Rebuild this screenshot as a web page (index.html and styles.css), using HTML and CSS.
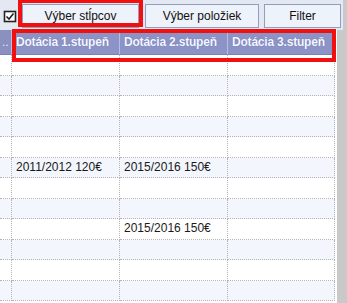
FILE: index.html
```html
<!DOCTYPE html>
<html lang="sk">
<head>
    <meta charset="UTF-8">
    <title>Dotácie</title>
    <link rel="stylesheet" href="styles.css">
</head>
<body>
    <div class="window">
        <div class="toolbar">
            <span class="check-icon">
                <svg width="14" height="13" viewBox="0 0 14 13">
                    <rect x="1.5" y="1.5" width="11" height="10" fill="#fff" stroke="#222" stroke-width="1.6"/>
                    <path d="M3.5 6.5 L6 9 L10.5 3.5" fill="none" stroke="#222" stroke-width="1.6"/>
                </svg>
            </span>
            <button class="tool-btn btn-columns">Výber stĺpcov</button>
            <button class="tool-btn btn-items">Výber položiek</button>
            <button class="tool-btn btn-filter">Filter</button>
        </div>

        <div class="body-area">
            <div class="grid">
                <div class="row head">
                    <div class="cell">..</div>
                    <div class="cell">Dotácia 1.stupeň</div>
                    <div class="cell">Dotácia 2.stupeň</div>
                    <div class="cell">Dotácia 3.stupeň</div>
                </div>
                <div class="row"><div class="cell"></div><div class="cell"></div><div class="cell"></div><div class="cell"></div></div>
                <div class="row alt"><div class="cell"></div><div class="cell"></div><div class="cell"></div><div class="cell"></div></div>
                <div class="row"><div class="cell"></div><div class="cell"></div><div class="cell"></div><div class="cell"></div></div>
                <div class="row alt"><div class="cell"></div><div class="cell"></div><div class="cell"></div><div class="cell"></div></div>
                <div class="row"><div class="cell"></div><div class="cell"></div><div class="cell"></div><div class="cell"></div></div>
                <div class="row alt"><div class="cell"></div><div class="cell">2011/2012 120€</div><div class="cell">2015/2016 150€</div><div class="cell"></div></div>
                <div class="row"><div class="cell"></div><div class="cell"></div><div class="cell"></div><div class="cell"></div></div>
                <div class="row alt"><div class="cell"></div><div class="cell"></div><div class="cell"></div><div class="cell"></div></div>
                <div class="row"><div class="cell"></div><div class="cell"></div><div class="cell">2015/2016 150€</div><div class="cell"></div></div>
                <div class="row alt"><div class="cell"></div><div class="cell"></div><div class="cell"></div><div class="cell"></div></div>
                <div class="row"><div class="cell"></div><div class="cell"></div><div class="cell"></div><div class="cell"></div></div>
                <div class="row alt"><div class="cell"></div><div class="cell"></div><div class="cell"></div><div class="cell"></div></div>
            </div>
            <div class="scrollbar"></div>
        </div>

        <!-- annotation frames -->
        <div class="mark mark-button"></div>
        <div class="mark mark-header"></div>
    </div>
</body>
</html>
```

FILE: styles.css
```css
* {
    margin: 0;
    padding: 0;
    box-sizing: border-box;
}

body {
    font-family: 'Liberation Sans', Arial, sans-serif;
    font-size: 12px;
    color: #1a1a1a;
    background: #fff;
}

.window {
    position: relative;
    width: 347px;
    height: 303px;
    overflow: hidden;
    background: #fff;
}

/* Toolbar */
.toolbar {
    height: 30px;
    background: #e3e8f2;
    display: flex;
    align-items: flex-start;
    padding-top: 4px;
    border-right: 4px solid #c9c9c9;
}

.check-icon {
    width: 22px;
    height: 20px;
    display: flex;
    align-items: center;
    padding-left: 3px;
    padding-top: 4px;
}

.tool-btn {
    height: 24px;
    background: #eef2fb;
    border: 1px solid #8f9fbd;
    font-family: inherit;
    font-size: 12px;
    color: #111;
    text-align: center;
}

.btn-columns {
    width: 117px;
}

.btn-items {
    width: 114px;
    margin-left: 6px;
}

.btn-filter {
    width: 77px;
    margin-left: 5px;
}

/* Grid */
.body-area {
    display: flex;
    height: 273px;
}

.grid {
    width: 337px;
    padding-right: 2px;
    background: #fff;
}

.row {
    display: grid;
    grid-template-columns: 12px 108px 108px 107px;
    height: 20.5px;
}

.row.alt {
    background: #f3f6fd;
}

.cell {
    border-right: 1px dotted #b4b4b4;
    border-bottom: 1px dotted #b4b4b4;
    padding-left: 4px;
    line-height: 19px;
    white-space: nowrap;
    overflow: hidden;
}

.row.head {
    height: 25px;
    background: #8c94c7;
}

.row.head .cell {
    border-right: 1px solid #b8bde0;
    border-bottom: 1px solid #7a82b4;
    color: #f6f6ff;
    font-weight: bold;
    letter-spacing: -0.2px;
    line-height: 24px;
    padding-left: 4px;
    text-shadow: 0 0 1px rgba(70, 75, 130, 0.6);
}

.row.head .cell:first-child {
    background: #8a91c0;
    padding-left: 2px;
    font-weight: normal;
}

.scrollbar {
    flex: 1;
    background: #c9c9c9;
}

/* Red annotation frames */
.mark {
    position: absolute;
    border: 4px solid #f01010;
}

.mark-button {
    left: 18px;
    top: -1px;
    width: 125px;
    height: 28px;
}

.mark-header {
    left: 12px;
    top: 29px;
    width: 324px;
    height: 33px;
}
```
